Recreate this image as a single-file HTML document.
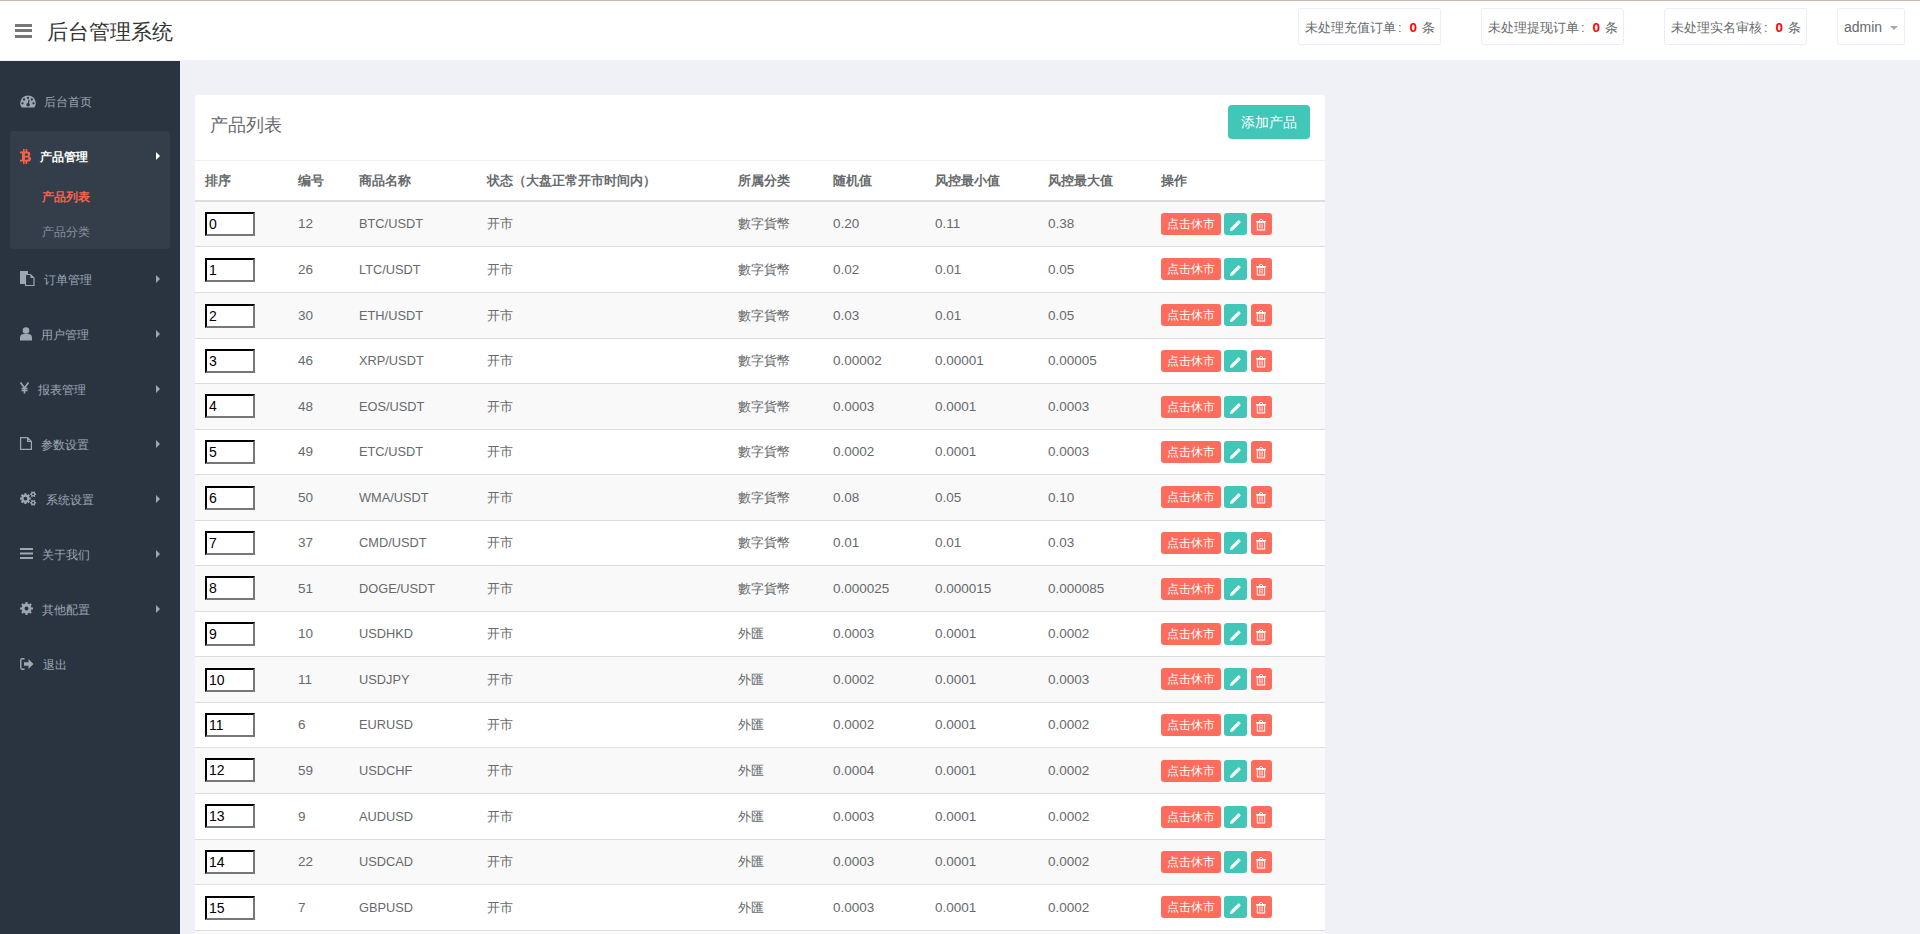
<!DOCTYPE html>
<html><head><meta charset="utf-8"><style>*{margin:0;padding:0;box-sizing:border-box}
html,body{width:1920px;height:934px;overflow:hidden;background:#f0f1f6;font-family:"Liberation Sans",sans-serif;color:#676a6c;font-size:13px}
.topline{position:absolute;left:0;top:0;width:1920px;height:1px;background:#c7b9b6}
.header{position:absolute;left:0;top:1px;width:1920px;height:59px;background:#fff}
.ham{position:absolute;left:15px;top:23px;width:17px;height:14px}
.ham i{position:absolute;left:0;width:17px;height:2.5px;background:#777}
.ham i:nth-child(1){top:0px}.ham i:nth-child(2){top:5.3px}.ham i:nth-child(3){top:11px}
.title{position:absolute;left:47px;top:16px;font-size:21px;line-height:30px;color:#333}
.nb{position:absolute;top:7px;height:37px;border:1px solid #eceef5;border-radius:3px;font-size:13px;line-height:37px;padding-left:6px;color:#676a6c;white-space:nowrap}
.nb b{color:#f00;font-weight:bold;font-size:13.5px;margin-right:1px}
.adm{padding-left:6px;font-size:14px;line-height:37px}
.caret{display:inline-block;width:0;height:0;border-left:4px solid transparent;border-right:4px solid transparent;border-top:4px solid #aaa;vertical-align:middle;margin-left:4px}
.side{position:absolute;left:0;top:61px;width:180px;height:873px;background:#2a3441}
.grp{position:absolute;left:10px;top:70px;width:160px;height:118px;background:#343e4b;border-radius:4px}
.si{position:absolute;left:0;width:180px;height:0;font-size:12px;color:#9ea6b2}
.side .si{margin-top:-61px}
.si span{position:absolute;top:-8.5px;line-height:18px;white-space:nowrap}
.si svg{position:absolute}
.si .arr{position:absolute;left:156px;top:-4px;width:0;height:0;border-top:4px solid transparent;border-bottom:4px solid transparent;border-left:4px solid #9ea6b2}
.act{color:#fff;font-weight:bold}
.act .arr{border-left-color:#fff}
.sub{color:#8a929e}
.sub.red{color:#f9614f;font-weight:bold}
.content{position:absolute;left:180px;top:60px;width:1740px;height:874px;background:#f0f1f6}
.panel{position:absolute;left:195px;top:95px;width:1130px;height:900px;background:#fff;border-radius:4px 4px 0 0}
.ptitle{position:absolute;left:15px;top:15px;font-size:18px;line-height:30px;color:#676a6c}
.addbtn{position:absolute;left:1033px;top:10px;width:82px;height:34px;background:#41c6b8;border-radius:4px;color:#fff;font-size:14px;line-height:34px;text-align:center}
.sep{position:absolute;left:0;top:65px;width:1130px;height:1px;background:#eef0f5}
.thr{position:absolute;left:0;top:66px;width:1130px;height:39px;font-weight:bold}
.thr span{position:absolute;top:0.5px;line-height:38px;white-space:nowrap}
.thb{position:absolute;left:0;top:105px;width:1130px;height:2px;background:#ddd}
.tr{position:absolute;left:0;width:1130px}
.tr .c{position:absolute;top:0;white-space:nowrap}
.tr .n{font-size:13.5px}
.tr .a{font-size:12.8px}
.bd{position:absolute;left:0;width:1130px;height:1px;background:#ddd}
.inp{position:absolute;width:50px;height:24px;border:2px solid;border-color:#000 #777 #777 #000;font-family:"Liberation Sans",sans-serif;font-size:14px;padding:0 2px;color:#000;background:#fff;outline:none}
.ops{position:absolute;height:22px;line-height:0;white-space:nowrap}
.btn{display:inline-block;vertical-align:top;height:22px;border-radius:3px;color:#fff;font-weight:normal;font-size:12px;line-height:22px;text-align:center;position:relative}
.btn.r{background:#fe6c5d}
.btn.t{background:#41c6b8}
.ops .btn:first-child{width:60px}
.btn.ic{width:23px;margin-left:3px}
.btn.ic2{width:21px;margin-left:4px}
.btn svg{position:absolute;left:6px;top:5px}
.nb .co{display:inline-block;width:13.5px;padding-left:2px}
</style></head><body>
<div class="topline"></div>
<div class="header">
  <div class="ham"><i></i><i></i><i></i></div>
  <div class="title">后台管理系统</div>
  <div class="nb" style="left:1298px;width:143px">未处理充值订单<span class="co">:</span><b>0</b> 条</div>
  <div class="nb" style="left:1481px;width:143px">未处理提现订单<span class="co">:</span><b>0</b> 条</div>
  <div class="nb" style="left:1664px;width:143px">未处理实名审核<span class="co">:</span><b>0</b> 条</div>
  <div class="nb adm" style="left:1837px;width:68px">admin <i class="caret"></i></div>
</div>
<div class="side">
  <div class="grp"></div>
  <div class="si" style="top:101px"><svg width="16" height="13" viewBox="0 0 16 13" style="left:19.5px;top:-6.5px"><path d="M1.56 12.6A7.8 7.8 0 1 1 14.44 12.6Z" fill="#9ea6b2"/><path d="M8.1 9.8 L9 4.8" stroke="#2a3441" stroke-width="1.2"/><circle cx="8.1" cy="9.8" r="1.8" fill="#2a3441"/><circle cx="8" cy="2.9" r="1.1" fill="#2a3441"/><circle cx="4" cy="4.5" r="1.15" fill="#2a3441"/><circle cx="11.8" cy="4.5" r="1.15" fill="#2a3441"/><circle cx="2.5" cy="8.3" r="1.15" fill="#2a3441"/><circle cx="13.5" cy="8.3" r="1.15" fill="#2a3441"/></svg><span style="left:44px">后台首页</span></div><div class="si" style="top:279px"><svg width="15" height="15" viewBox="0 0 15 15" style="left:20px;top:-8px"><path d="M0 0h8v3H5v10H0z" fill="#9ea6b2"/><path d="M5.5 3.5h5l3.5 3.5v7.5h-8.5z" fill="none" stroke="#9ea6b2" stroke-width="1.2"/><path d="M10.5 3.5v3.5h3.5" fill="#9ea6b2"/></svg><span style="left:44px">订单管理</span><i class="arr"></i></div><div class="si" style="top:334px"><svg width="12" height="14" viewBox="0 0 12 14" style="left:20px;top:-7px"><circle cx="6" cy="3.5" r="3.3" fill="#9ea6b2"/><path d="M0 13.5v-2.5a4 4 0 0 1 4-4h4a4 4 0 0 1 4 4v2.5z" fill="#9ea6b2"/></svg><span style="left:41px">用户管理</span><i class="arr"></i></div><div class="si" style="top:389px"><svg width="9" height="12" viewBox="0 0 9 12" style="left:20px;top:-7px"><path d="M0.5 0.5 L4.5 6 L8.5 0.5 M4.5 6 V11.5 M1.5 6.5 H7.5 M1.5 8.5 H7.5" fill="none" stroke="#9ea6b2" stroke-width="1.6"/></svg><span style="left:38px">报表管理</span><i class="arr"></i></div><div class="si" style="top:444px"><svg width="12" height="13" viewBox="0 0 12 13" style="left:20px;top:-7px"><path d="M0.6 0.6h7l3.8 3.8v8H0.6z M7.6 0.6v3.8h3.8" fill="none" stroke="#9ea6b2" stroke-width="1.2"/></svg><span style="left:41px">参数设置</span><i class="arr"></i></div><div class="si" style="top:499px"><svg width="18" height="16" viewBox="0 0 18 16" style="left:19px;top:-9px"><path fill-rule="evenodd" d="M10.47 7.58 L11.79 7.53 L11.79 9.67 L10.47 9.62 L10.00 10.76 L10.97 11.66 L9.46 13.17 L8.56 12.20 L7.42 12.67 L7.47 13.99 L5.33 13.99 L5.38 12.67 L4.24 12.20 L3.34 13.17 L1.83 11.66 L2.80 10.76 L2.33 9.62 L1.01 9.67 L1.01 7.53 L2.33 7.58 L2.80 6.44 L1.83 5.54 L3.34 4.03 L4.24 5.00 L5.38 4.53 L5.33 3.21 L7.47 3.21 L7.42 4.53 L8.56 5.00 L9.46 4.03 L10.97 5.54 L10.00 6.44 Z M8.30 8.60 A1.9 1.9 0 1 0 4.50 8.60 A1.9 1.9 0 1 0 8.30 8.60 Z" fill="#9ea6b2"/><path fill-rule="evenodd" d="M16.18 3.49 L17.09 3.40 L17.09 5.00 L16.18 4.91 L15.75 5.65 L16.29 6.39 L14.90 7.19 L14.53 6.36 L13.67 6.36 L13.30 7.19 L11.91 6.39 L12.45 5.65 L12.02 4.91 L11.11 5.00 L11.11 3.40 L12.02 3.49 L12.45 2.75 L11.91 2.01 L13.30 1.21 L13.67 2.04 L14.53 2.04 L14.90 1.21 L16.29 2.01 L15.75 2.75 Z M15.10 4.20 A1.0 1.0 0 1 0 13.10 4.20 A1.0 1.0 0 1 0 15.10 4.20 Z" fill="#9ea6b2"/><path fill-rule="evenodd" d="M16.18 12.09 L17.09 12.00 L17.09 13.60 L16.18 13.51 L15.75 14.25 L16.29 14.99 L14.90 15.79 L14.53 14.96 L13.67 14.96 L13.30 15.79 L11.91 14.99 L12.45 14.25 L12.02 13.51 L11.11 13.60 L11.11 12.00 L12.02 12.09 L12.45 11.35 L11.91 10.61 L13.30 9.81 L13.67 10.64 L14.53 10.64 L14.90 9.81 L16.29 10.61 L15.75 11.35 Z M15.10 12.80 A1.0 1.0 0 1 0 13.10 12.80 A1.0 1.0 0 1 0 15.10 12.80 Z" fill="#9ea6b2"/></svg><span style="left:46px">系统设置</span><i class="arr"></i></div><div class="si" style="top:554px"><svg width="13" height="11" viewBox="0 0 13 11" style="left:20px;top:-6px"><path d="M0 0h13v2H0z M0 4.5h13v2H0z M0 9h13v2H0z" fill="#9ea6b2"/></svg><span style="left:42px">关于我们</span><i class="arr"></i></div><div class="si" style="top:609px"><svg width="16" height="16" viewBox="0 0 16 16" style="left:19px;top:-9px"><path fill-rule="evenodd" d="M12.39 7.48 L14.01 7.42 L14.01 9.58 L12.39 9.52 L11.68 11.24 L12.87 12.34 L11.34 13.87 L10.24 12.68 L8.52 13.39 L8.58 15.01 L6.42 15.01 L6.48 13.39 L4.76 12.68 L3.66 13.87 L2.13 12.34 L3.32 11.24 L2.61 9.52 L0.99 9.58 L0.99 7.42 L2.61 7.48 L3.32 5.76 L2.13 4.66 L3.66 3.13 L4.76 4.32 L6.48 3.61 L6.42 1.99 L8.58 1.99 L8.52 3.61 L10.24 4.32 L11.34 3.13 L12.87 4.66 L11.68 5.76 Z M9.50 8.50 A2.0 2.0 0 1 0 5.50 8.50 A2.0 2.0 0 1 0 9.50 8.50 Z" fill="#9ea6b2"/></svg><span style="left:42px">其他配置</span><i class="arr"></i></div><div class="si" style="top:664px"><svg width="14" height="12" viewBox="0 0 14 12" style="left:20px;top:-6px"><path d="M4.5 0.8H2A1.3 1.3 0 0 0 0.8 2v8A1.3 1.3 0 0 0 2 11.2h2.5" fill="none" stroke="#9ea6b2" stroke-width="1.4"/><path d="M4 4.2h4.5V1L13.5 6 8.5 11V7.8H4z" fill="#9ea6b2"/></svg><span style="left:43px">退出</span></div>
  <div class="si act" style="top:156px"><svg width="12" height="15" viewBox="0 0 12 15" style="left:20px;top:-7px"><path fill-rule="evenodd" fill="#f9614f" d="M0 2.5H7.3C9.4 2.5 10.3 3.6 10.3 4.9C10.3 6 9.7 6.8 9 7.2C10.3 7.6 11 8.6 11 9.9C11 11.6 9.8 12.5 7.7 12.5H0V10.7H2V4.3H0Z M4.9 4.6H6.9C7.6 4.6 8 5.1 8 5.7C8 6.3 7.6 6.8 6.9 6.8H4.9Z M4.9 8.5H7.3C8 8.5 8.5 9 8.5 9.6C8.5 10.2 8 10.7 7.3 10.7H4.9Z M3 0H4.6V2.6H3Z M5.6 0H7.2V2.6H5.6Z M3 12.4H4.6V15H3Z M5.6 12.4H7.2V15H5.6Z"/></svg><span style="left:40px;top:-8px">产品管理</span><i class="arr"></i></div>
  <div class="si sub red" style="top:196px"><span style="left:42px">产品列表</span></div>
  <div class="si sub" style="top:231px"><span style="left:42px">产品分类</span></div>
</div>
<div class="content"></div>
<div class="panel">
  <div class="ptitle">产品列表</div>
  <div class="addbtn">添加产品</div>
  <div class="sep"></div>
  <div class="thr">
    <span style="left:10px">排序</span><span style="left:103px">编号</span><span style="left:164px">商品名称</span><span style="left:292px">状态（大盘正常开市时间内）</span><span style="left:543px">所属分类</span><span style="left:638px">随机值</span><span style="left:740px">风控最小值</span><span style="left:853px">风控最大值</span><span style="left:966px">操作</span>
  </div>
  <div class="thb"></div>
  <div class="tr" style="top:107px;height:44px;line-height:44px;background:#f9f9f9"><input class="inp" style="left:10px;top:10px" value="0"><span class="c n" style="left:103px">12</span><span class="c a" style="left:164px">BTC/USDT</span><span class="c" style="left:292px">开市</span><span class="c" style="left:543px">數字貨幣</span><span class="c n" style="left:638px">0.20</span><span class="c n" style="left:740px">0.11</span><span class="c n" style="left:853px">0.38</span><span class="ops" style="left:966px;top:11px"><b class="btn r">点击休市</b><b class="btn t ic"><svg width="11" height="11" viewBox="0 0 11 11" style="left:6px;top:6.5px"><path d="M0.1 10.9 L0.4 8.3 L8.2 0.5 Q8.7 0.1 9.2 0.6 L10.4 1.8 Q10.9 2.3 10.5 2.8 L2.7 10.6 Z" fill="#fff"/><path d="M6.6 1.7 L9.2 4.3" stroke="#41c6b8" stroke-width="0.5" opacity="0.6"/><path d="M0.9 8.4 L2.5 10" stroke="#41c6b8" stroke-width="0.6" opacity="0.7"/></svg></b><b class="btn r ic2"><svg width="10" height="12" viewBox="0 0 11 12" preserveAspectRatio="none" style="left:5px;top:6px"><path d="M3.6 2 Q3.8 0.5 5.5 0.5 Q7.2 0.5 7.4 2" fill="none" stroke="#fff" stroke-width="1"/><rect x="0" y="2" width="11" height="1.3" fill="#fff"/><rect x="1.45" y="3.2" width="8.1" height="7.8" fill="none" stroke="#fff" stroke-width="1.1"/><path d="M3.9 4.4V9.6 M5.5 4.4V9.6 M7.1 4.4V9.6" stroke="#fff" stroke-width="0.7"/></svg></b></span></div><div class="bd" style="top:151px"></div><div class="tr" style="top:152px;height:45px;line-height:45px;background:#fff"><input class="inp" style="left:10px;top:11px" value="1"><span class="c n" style="left:103px">26</span><span class="c a" style="left:164px">LTC/USDT</span><span class="c" style="left:292px">开市</span><span class="c" style="left:543px">數字貨幣</span><span class="c n" style="left:638px">0.02</span><span class="c n" style="left:740px">0.01</span><span class="c n" style="left:853px">0.05</span><span class="ops" style="left:966px;top:11px"><b class="btn r">点击休市</b><b class="btn t ic"><svg width="11" height="11" viewBox="0 0 11 11" style="left:6px;top:6.5px"><path d="M0.1 10.9 L0.4 8.3 L8.2 0.5 Q8.7 0.1 9.2 0.6 L10.4 1.8 Q10.9 2.3 10.5 2.8 L2.7 10.6 Z" fill="#fff"/><path d="M6.6 1.7 L9.2 4.3" stroke="#41c6b8" stroke-width="0.5" opacity="0.6"/><path d="M0.9 8.4 L2.5 10" stroke="#41c6b8" stroke-width="0.6" opacity="0.7"/></svg></b><b class="btn r ic2"><svg width="10" height="12" viewBox="0 0 11 12" preserveAspectRatio="none" style="left:5px;top:6px"><path d="M3.6 2 Q3.8 0.5 5.5 0.5 Q7.2 0.5 7.4 2" fill="none" stroke="#fff" stroke-width="1"/><rect x="0" y="2" width="11" height="1.3" fill="#fff"/><rect x="1.45" y="3.2" width="8.1" height="7.8" fill="none" stroke="#fff" stroke-width="1.1"/><path d="M3.9 4.4V9.6 M5.5 4.4V9.6 M7.1 4.4V9.6" stroke="#fff" stroke-width="0.7"/></svg></b></span></div><div class="bd" style="top:197px"></div><div class="tr" style="top:198px;height:45px;line-height:45px;background:#f9f9f9"><input class="inp" style="left:10px;top:11px" value="2"><span class="c n" style="left:103px">30</span><span class="c a" style="left:164px">ETH/USDT</span><span class="c" style="left:292px">开市</span><span class="c" style="left:543px">數字貨幣</span><span class="c n" style="left:638px">0.03</span><span class="c n" style="left:740px">0.01</span><span class="c n" style="left:853px">0.05</span><span class="ops" style="left:966px;top:11px"><b class="btn r">点击休市</b><b class="btn t ic"><svg width="11" height="11" viewBox="0 0 11 11" style="left:6px;top:6.5px"><path d="M0.1 10.9 L0.4 8.3 L8.2 0.5 Q8.7 0.1 9.2 0.6 L10.4 1.8 Q10.9 2.3 10.5 2.8 L2.7 10.6 Z" fill="#fff"/><path d="M6.6 1.7 L9.2 4.3" stroke="#41c6b8" stroke-width="0.5" opacity="0.6"/><path d="M0.9 8.4 L2.5 10" stroke="#41c6b8" stroke-width="0.6" opacity="0.7"/></svg></b><b class="btn r ic2"><svg width="10" height="12" viewBox="0 0 11 12" preserveAspectRatio="none" style="left:5px;top:6px"><path d="M3.6 2 Q3.8 0.5 5.5 0.5 Q7.2 0.5 7.4 2" fill="none" stroke="#fff" stroke-width="1"/><rect x="0" y="2" width="11" height="1.3" fill="#fff"/><rect x="1.45" y="3.2" width="8.1" height="7.8" fill="none" stroke="#fff" stroke-width="1.1"/><path d="M3.9 4.4V9.6 M5.5 4.4V9.6 M7.1 4.4V9.6" stroke="#fff" stroke-width="0.7"/></svg></b></span></div><div class="bd" style="top:243px"></div><div class="tr" style="top:244px;height:44px;line-height:44px;background:#fff"><input class="inp" style="left:10px;top:10px" value="3"><span class="c n" style="left:103px">46</span><span class="c a" style="left:164px">XRP/USDT</span><span class="c" style="left:292px">开市</span><span class="c" style="left:543px">數字貨幣</span><span class="c n" style="left:638px">0.00002</span><span class="c n" style="left:740px">0.00001</span><span class="c n" style="left:853px">0.00005</span><span class="ops" style="left:966px;top:11px"><b class="btn r">点击休市</b><b class="btn t ic"><svg width="11" height="11" viewBox="0 0 11 11" style="left:6px;top:6.5px"><path d="M0.1 10.9 L0.4 8.3 L8.2 0.5 Q8.7 0.1 9.2 0.6 L10.4 1.8 Q10.9 2.3 10.5 2.8 L2.7 10.6 Z" fill="#fff"/><path d="M6.6 1.7 L9.2 4.3" stroke="#41c6b8" stroke-width="0.5" opacity="0.6"/><path d="M0.9 8.4 L2.5 10" stroke="#41c6b8" stroke-width="0.6" opacity="0.7"/></svg></b><b class="btn r ic2"><svg width="10" height="12" viewBox="0 0 11 12" preserveAspectRatio="none" style="left:5px;top:6px"><path d="M3.6 2 Q3.8 0.5 5.5 0.5 Q7.2 0.5 7.4 2" fill="none" stroke="#fff" stroke-width="1"/><rect x="0" y="2" width="11" height="1.3" fill="#fff"/><rect x="1.45" y="3.2" width="8.1" height="7.8" fill="none" stroke="#fff" stroke-width="1.1"/><path d="M3.9 4.4V9.6 M5.5 4.4V9.6 M7.1 4.4V9.6" stroke="#fff" stroke-width="0.7"/></svg></b></span></div><div class="bd" style="top:288px"></div><div class="tr" style="top:289px;height:45px;line-height:45px;background:#f9f9f9"><input class="inp" style="left:10px;top:10px" value="4"><span class="c n" style="left:103px">48</span><span class="c a" style="left:164px">EOS/USDT</span><span class="c" style="left:292px">开市</span><span class="c" style="left:543px">數字貨幣</span><span class="c n" style="left:638px">0.0003</span><span class="c n" style="left:740px">0.0001</span><span class="c n" style="left:853px">0.0003</span><span class="ops" style="left:966px;top:12px"><b class="btn r">点击休市</b><b class="btn t ic"><svg width="11" height="11" viewBox="0 0 11 11" style="left:6px;top:6.5px"><path d="M0.1 10.9 L0.4 8.3 L8.2 0.5 Q8.7 0.1 9.2 0.6 L10.4 1.8 Q10.9 2.3 10.5 2.8 L2.7 10.6 Z" fill="#fff"/><path d="M6.6 1.7 L9.2 4.3" stroke="#41c6b8" stroke-width="0.5" opacity="0.6"/><path d="M0.9 8.4 L2.5 10" stroke="#41c6b8" stroke-width="0.6" opacity="0.7"/></svg></b><b class="btn r ic2"><svg width="10" height="12" viewBox="0 0 11 12" preserveAspectRatio="none" style="left:5px;top:6px"><path d="M3.6 2 Q3.8 0.5 5.5 0.5 Q7.2 0.5 7.4 2" fill="none" stroke="#fff" stroke-width="1"/><rect x="0" y="2" width="11" height="1.3" fill="#fff"/><rect x="1.45" y="3.2" width="8.1" height="7.8" fill="none" stroke="#fff" stroke-width="1.1"/><path d="M3.9 4.4V9.6 M5.5 4.4V9.6 M7.1 4.4V9.6" stroke="#fff" stroke-width="0.7"/></svg></b></span></div><div class="bd" style="top:334px"></div><div class="tr" style="top:335px;height:44px;line-height:44px;background:#fff"><input class="inp" style="left:10px;top:10px" value="5"><span class="c n" style="left:103px">49</span><span class="c a" style="left:164px">ETC/USDT</span><span class="c" style="left:292px">开市</span><span class="c" style="left:543px">數字貨幣</span><span class="c n" style="left:638px">0.0002</span><span class="c n" style="left:740px">0.0001</span><span class="c n" style="left:853px">0.0003</span><span class="ops" style="left:966px;top:11px"><b class="btn r">点击休市</b><b class="btn t ic"><svg width="11" height="11" viewBox="0 0 11 11" style="left:6px;top:6.5px"><path d="M0.1 10.9 L0.4 8.3 L8.2 0.5 Q8.7 0.1 9.2 0.6 L10.4 1.8 Q10.9 2.3 10.5 2.8 L2.7 10.6 Z" fill="#fff"/><path d="M6.6 1.7 L9.2 4.3" stroke="#41c6b8" stroke-width="0.5" opacity="0.6"/><path d="M0.9 8.4 L2.5 10" stroke="#41c6b8" stroke-width="0.6" opacity="0.7"/></svg></b><b class="btn r ic2"><svg width="10" height="12" viewBox="0 0 11 12" preserveAspectRatio="none" style="left:5px;top:6px"><path d="M3.6 2 Q3.8 0.5 5.5 0.5 Q7.2 0.5 7.4 2" fill="none" stroke="#fff" stroke-width="1"/><rect x="0" y="2" width="11" height="1.3" fill="#fff"/><rect x="1.45" y="3.2" width="8.1" height="7.8" fill="none" stroke="#fff" stroke-width="1.1"/><path d="M3.9 4.4V9.6 M5.5 4.4V9.6 M7.1 4.4V9.6" stroke="#fff" stroke-width="0.7"/></svg></b></span></div><div class="bd" style="top:379px"></div><div class="tr" style="top:380px;height:45px;line-height:45px;background:#f9f9f9"><input class="inp" style="left:10px;top:11px" value="6"><span class="c n" style="left:103px">50</span><span class="c a" style="left:164px">WMA/USDT</span><span class="c" style="left:292px">开市</span><span class="c" style="left:543px">數字貨幣</span><span class="c n" style="left:638px">0.08</span><span class="c n" style="left:740px">0.05</span><span class="c n" style="left:853px">0.10</span><span class="ops" style="left:966px;top:11px"><b class="btn r">点击休市</b><b class="btn t ic"><svg width="11" height="11" viewBox="0 0 11 11" style="left:6px;top:6.5px"><path d="M0.1 10.9 L0.4 8.3 L8.2 0.5 Q8.7 0.1 9.2 0.6 L10.4 1.8 Q10.9 2.3 10.5 2.8 L2.7 10.6 Z" fill="#fff"/><path d="M6.6 1.7 L9.2 4.3" stroke="#41c6b8" stroke-width="0.5" opacity="0.6"/><path d="M0.9 8.4 L2.5 10" stroke="#41c6b8" stroke-width="0.6" opacity="0.7"/></svg></b><b class="btn r ic2"><svg width="10" height="12" viewBox="0 0 11 12" preserveAspectRatio="none" style="left:5px;top:6px"><path d="M3.6 2 Q3.8 0.5 5.5 0.5 Q7.2 0.5 7.4 2" fill="none" stroke="#fff" stroke-width="1"/><rect x="0" y="2" width="11" height="1.3" fill="#fff"/><rect x="1.45" y="3.2" width="8.1" height="7.8" fill="none" stroke="#fff" stroke-width="1.1"/><path d="M3.9 4.4V9.6 M5.5 4.4V9.6 M7.1 4.4V9.6" stroke="#fff" stroke-width="0.7"/></svg></b></span></div><div class="bd" style="top:425px"></div><div class="tr" style="top:426px;height:44px;line-height:44px;background:#fff"><input class="inp" style="left:10px;top:10px" value="7"><span class="c n" style="left:103px">37</span><span class="c a" style="left:164px">CMD/USDT</span><span class="c" style="left:292px">开市</span><span class="c" style="left:543px">數字貨幣</span><span class="c n" style="left:638px">0.01</span><span class="c n" style="left:740px">0.01</span><span class="c n" style="left:853px">0.03</span><span class="ops" style="left:966px;top:11px"><b class="btn r">点击休市</b><b class="btn t ic"><svg width="11" height="11" viewBox="0 0 11 11" style="left:6px;top:6.5px"><path d="M0.1 10.9 L0.4 8.3 L8.2 0.5 Q8.7 0.1 9.2 0.6 L10.4 1.8 Q10.9 2.3 10.5 2.8 L2.7 10.6 Z" fill="#fff"/><path d="M6.6 1.7 L9.2 4.3" stroke="#41c6b8" stroke-width="0.5" opacity="0.6"/><path d="M0.9 8.4 L2.5 10" stroke="#41c6b8" stroke-width="0.6" opacity="0.7"/></svg></b><b class="btn r ic2"><svg width="10" height="12" viewBox="0 0 11 12" preserveAspectRatio="none" style="left:5px;top:6px"><path d="M3.6 2 Q3.8 0.5 5.5 0.5 Q7.2 0.5 7.4 2" fill="none" stroke="#fff" stroke-width="1"/><rect x="0" y="2" width="11" height="1.3" fill="#fff"/><rect x="1.45" y="3.2" width="8.1" height="7.8" fill="none" stroke="#fff" stroke-width="1.1"/><path d="M3.9 4.4V9.6 M5.5 4.4V9.6 M7.1 4.4V9.6" stroke="#fff" stroke-width="0.7"/></svg></b></span></div><div class="bd" style="top:470px"></div><div class="tr" style="top:471px;height:45px;line-height:45px;background:#f9f9f9"><input class="inp" style="left:10px;top:10px" value="8"><span class="c n" style="left:103px">51</span><span class="c a" style="left:164px">DOGE/USDT</span><span class="c" style="left:292px">开市</span><span class="c" style="left:543px">數字貨幣</span><span class="c n" style="left:638px">0.000025</span><span class="c n" style="left:740px">0.000015</span><span class="c n" style="left:853px">0.000085</span><span class="ops" style="left:966px;top:12px"><b class="btn r">点击休市</b><b class="btn t ic"><svg width="11" height="11" viewBox="0 0 11 11" style="left:6px;top:6.5px"><path d="M0.1 10.9 L0.4 8.3 L8.2 0.5 Q8.7 0.1 9.2 0.6 L10.4 1.8 Q10.9 2.3 10.5 2.8 L2.7 10.6 Z" fill="#fff"/><path d="M6.6 1.7 L9.2 4.3" stroke="#41c6b8" stroke-width="0.5" opacity="0.6"/><path d="M0.9 8.4 L2.5 10" stroke="#41c6b8" stroke-width="0.6" opacity="0.7"/></svg></b><b class="btn r ic2"><svg width="10" height="12" viewBox="0 0 11 12" preserveAspectRatio="none" style="left:5px;top:6px"><path d="M3.6 2 Q3.8 0.5 5.5 0.5 Q7.2 0.5 7.4 2" fill="none" stroke="#fff" stroke-width="1"/><rect x="0" y="2" width="11" height="1.3" fill="#fff"/><rect x="1.45" y="3.2" width="8.1" height="7.8" fill="none" stroke="#fff" stroke-width="1.1"/><path d="M3.9 4.4V9.6 M5.5 4.4V9.6 M7.1 4.4V9.6" stroke="#fff" stroke-width="0.7"/></svg></b></span></div><div class="bd" style="top:516px"></div><div class="tr" style="top:517px;height:44px;line-height:44px;background:#fff"><input class="inp" style="left:10px;top:10px" value="9"><span class="c n" style="left:103px">10</span><span class="c a" style="left:164px">USDHKD</span><span class="c" style="left:292px">开市</span><span class="c" style="left:543px">外匯</span><span class="c n" style="left:638px">0.0003</span><span class="c n" style="left:740px">0.0001</span><span class="c n" style="left:853px">0.0002</span><span class="ops" style="left:966px;top:11px"><b class="btn r">点击休市</b><b class="btn t ic"><svg width="11" height="11" viewBox="0 0 11 11" style="left:6px;top:6.5px"><path d="M0.1 10.9 L0.4 8.3 L8.2 0.5 Q8.7 0.1 9.2 0.6 L10.4 1.8 Q10.9 2.3 10.5 2.8 L2.7 10.6 Z" fill="#fff"/><path d="M6.6 1.7 L9.2 4.3" stroke="#41c6b8" stroke-width="0.5" opacity="0.6"/><path d="M0.9 8.4 L2.5 10" stroke="#41c6b8" stroke-width="0.6" opacity="0.7"/></svg></b><b class="btn r ic2"><svg width="10" height="12" viewBox="0 0 11 12" preserveAspectRatio="none" style="left:5px;top:6px"><path d="M3.6 2 Q3.8 0.5 5.5 0.5 Q7.2 0.5 7.4 2" fill="none" stroke="#fff" stroke-width="1"/><rect x="0" y="2" width="11" height="1.3" fill="#fff"/><rect x="1.45" y="3.2" width="8.1" height="7.8" fill="none" stroke="#fff" stroke-width="1.1"/><path d="M3.9 4.4V9.6 M5.5 4.4V9.6 M7.1 4.4V9.6" stroke="#fff" stroke-width="0.7"/></svg></b></span></div><div class="bd" style="top:561px"></div><div class="tr" style="top:562px;height:45px;line-height:45px;background:#f9f9f9"><input class="inp" style="left:10px;top:11px" value="10"><span class="c n" style="left:103px">11</span><span class="c a" style="left:164px">USDJPY</span><span class="c" style="left:292px">开市</span><span class="c" style="left:543px">外匯</span><span class="c n" style="left:638px">0.0002</span><span class="c n" style="left:740px">0.0001</span><span class="c n" style="left:853px">0.0003</span><span class="ops" style="left:966px;top:11px"><b class="btn r">点击休市</b><b class="btn t ic"><svg width="11" height="11" viewBox="0 0 11 11" style="left:6px;top:6.5px"><path d="M0.1 10.9 L0.4 8.3 L8.2 0.5 Q8.7 0.1 9.2 0.6 L10.4 1.8 Q10.9 2.3 10.5 2.8 L2.7 10.6 Z" fill="#fff"/><path d="M6.6 1.7 L9.2 4.3" stroke="#41c6b8" stroke-width="0.5" opacity="0.6"/><path d="M0.9 8.4 L2.5 10" stroke="#41c6b8" stroke-width="0.6" opacity="0.7"/></svg></b><b class="btn r ic2"><svg width="10" height="12" viewBox="0 0 11 12" preserveAspectRatio="none" style="left:5px;top:6px"><path d="M3.6 2 Q3.8 0.5 5.5 0.5 Q7.2 0.5 7.4 2" fill="none" stroke="#fff" stroke-width="1"/><rect x="0" y="2" width="11" height="1.3" fill="#fff"/><rect x="1.45" y="3.2" width="8.1" height="7.8" fill="none" stroke="#fff" stroke-width="1.1"/><path d="M3.9 4.4V9.6 M5.5 4.4V9.6 M7.1 4.4V9.6" stroke="#fff" stroke-width="0.7"/></svg></b></span></div><div class="bd" style="top:607px"></div><div class="tr" style="top:608px;height:44px;line-height:44px;background:#fff"><input class="inp" style="left:10px;top:10px" value="11"><span class="c n" style="left:103px">6</span><span class="c a" style="left:164px">EURUSD</span><span class="c" style="left:292px">开市</span><span class="c" style="left:543px">外匯</span><span class="c n" style="left:638px">0.0002</span><span class="c n" style="left:740px">0.0001</span><span class="c n" style="left:853px">0.0002</span><span class="ops" style="left:966px;top:11px"><b class="btn r">点击休市</b><b class="btn t ic"><svg width="11" height="11" viewBox="0 0 11 11" style="left:6px;top:6.5px"><path d="M0.1 10.9 L0.4 8.3 L8.2 0.5 Q8.7 0.1 9.2 0.6 L10.4 1.8 Q10.9 2.3 10.5 2.8 L2.7 10.6 Z" fill="#fff"/><path d="M6.6 1.7 L9.2 4.3" stroke="#41c6b8" stroke-width="0.5" opacity="0.6"/><path d="M0.9 8.4 L2.5 10" stroke="#41c6b8" stroke-width="0.6" opacity="0.7"/></svg></b><b class="btn r ic2"><svg width="10" height="12" viewBox="0 0 11 12" preserveAspectRatio="none" style="left:5px;top:6px"><path d="M3.6 2 Q3.8 0.5 5.5 0.5 Q7.2 0.5 7.4 2" fill="none" stroke="#fff" stroke-width="1"/><rect x="0" y="2" width="11" height="1.3" fill="#fff"/><rect x="1.45" y="3.2" width="8.1" height="7.8" fill="none" stroke="#fff" stroke-width="1.1"/><path d="M3.9 4.4V9.6 M5.5 4.4V9.6 M7.1 4.4V9.6" stroke="#fff" stroke-width="0.7"/></svg></b></span></div><div class="bd" style="top:652px"></div><div class="tr" style="top:653px;height:45px;line-height:45px;background:#f9f9f9"><input class="inp" style="left:10px;top:10px" value="12"><span class="c n" style="left:103px">59</span><span class="c a" style="left:164px">USDCHF</span><span class="c" style="left:292px">开市</span><span class="c" style="left:543px">外匯</span><span class="c n" style="left:638px">0.0004</span><span class="c n" style="left:740px">0.0001</span><span class="c n" style="left:853px">0.0002</span><span class="ops" style="left:966px;top:12px"><b class="btn r">点击休市</b><b class="btn t ic"><svg width="11" height="11" viewBox="0 0 11 11" style="left:6px;top:6.5px"><path d="M0.1 10.9 L0.4 8.3 L8.2 0.5 Q8.7 0.1 9.2 0.6 L10.4 1.8 Q10.9 2.3 10.5 2.8 L2.7 10.6 Z" fill="#fff"/><path d="M6.6 1.7 L9.2 4.3" stroke="#41c6b8" stroke-width="0.5" opacity="0.6"/><path d="M0.9 8.4 L2.5 10" stroke="#41c6b8" stroke-width="0.6" opacity="0.7"/></svg></b><b class="btn r ic2"><svg width="10" height="12" viewBox="0 0 11 12" preserveAspectRatio="none" style="left:5px;top:6px"><path d="M3.6 2 Q3.8 0.5 5.5 0.5 Q7.2 0.5 7.4 2" fill="none" stroke="#fff" stroke-width="1"/><rect x="0" y="2" width="11" height="1.3" fill="#fff"/><rect x="1.45" y="3.2" width="8.1" height="7.8" fill="none" stroke="#fff" stroke-width="1.1"/><path d="M3.9 4.4V9.6 M5.5 4.4V9.6 M7.1 4.4V9.6" stroke="#fff" stroke-width="0.7"/></svg></b></span></div><div class="bd" style="top:698px"></div><div class="tr" style="top:699px;height:45px;line-height:45px;background:#fff"><input class="inp" style="left:10px;top:10px" value="13"><span class="c n" style="left:103px">9</span><span class="c a" style="left:164px">AUDUSD</span><span class="c" style="left:292px">开市</span><span class="c" style="left:543px">外匯</span><span class="c n" style="left:638px">0.0003</span><span class="c n" style="left:740px">0.0001</span><span class="c n" style="left:853px">0.0002</span><span class="ops" style="left:966px;top:12px"><b class="btn r">点击休市</b><b class="btn t ic"><svg width="11" height="11" viewBox="0 0 11 11" style="left:6px;top:6.5px"><path d="M0.1 10.9 L0.4 8.3 L8.2 0.5 Q8.7 0.1 9.2 0.6 L10.4 1.8 Q10.9 2.3 10.5 2.8 L2.7 10.6 Z" fill="#fff"/><path d="M6.6 1.7 L9.2 4.3" stroke="#41c6b8" stroke-width="0.5" opacity="0.6"/><path d="M0.9 8.4 L2.5 10" stroke="#41c6b8" stroke-width="0.6" opacity="0.7"/></svg></b><b class="btn r ic2"><svg width="10" height="12" viewBox="0 0 11 12" preserveAspectRatio="none" style="left:5px;top:6px"><path d="M3.6 2 Q3.8 0.5 5.5 0.5 Q7.2 0.5 7.4 2" fill="none" stroke="#fff" stroke-width="1"/><rect x="0" y="2" width="11" height="1.3" fill="#fff"/><rect x="1.45" y="3.2" width="8.1" height="7.8" fill="none" stroke="#fff" stroke-width="1.1"/><path d="M3.9 4.4V9.6 M5.5 4.4V9.6 M7.1 4.4V9.6" stroke="#fff" stroke-width="0.7"/></svg></b></span></div><div class="bd" style="top:744px"></div><div class="tr" style="top:745px;height:44px;line-height:44px;background:#f9f9f9"><input class="inp" style="left:10px;top:10px" value="14"><span class="c n" style="left:103px">22</span><span class="c a" style="left:164px">USDCAD</span><span class="c" style="left:292px">开市</span><span class="c" style="left:543px">外匯</span><span class="c n" style="left:638px">0.0003</span><span class="c n" style="left:740px">0.0001</span><span class="c n" style="left:853px">0.0002</span><span class="ops" style="left:966px;top:11px"><b class="btn r">点击休市</b><b class="btn t ic"><svg width="11" height="11" viewBox="0 0 11 11" style="left:6px;top:6.5px"><path d="M0.1 10.9 L0.4 8.3 L8.2 0.5 Q8.7 0.1 9.2 0.6 L10.4 1.8 Q10.9 2.3 10.5 2.8 L2.7 10.6 Z" fill="#fff"/><path d="M6.6 1.7 L9.2 4.3" stroke="#41c6b8" stroke-width="0.5" opacity="0.6"/><path d="M0.9 8.4 L2.5 10" stroke="#41c6b8" stroke-width="0.6" opacity="0.7"/></svg></b><b class="btn r ic2"><svg width="10" height="12" viewBox="0 0 11 12" preserveAspectRatio="none" style="left:5px;top:6px"><path d="M3.6 2 Q3.8 0.5 5.5 0.5 Q7.2 0.5 7.4 2" fill="none" stroke="#fff" stroke-width="1"/><rect x="0" y="2" width="11" height="1.3" fill="#fff"/><rect x="1.45" y="3.2" width="8.1" height="7.8" fill="none" stroke="#fff" stroke-width="1.1"/><path d="M3.9 4.4V9.6 M5.5 4.4V9.6 M7.1 4.4V9.6" stroke="#fff" stroke-width="0.7"/></svg></b></span></div><div class="bd" style="top:789px"></div><div class="tr" style="top:790px;height:45px;line-height:45px;background:#fff"><input class="inp" style="left:10px;top:11px" value="15"><span class="c n" style="left:103px">7</span><span class="c a" style="left:164px">GBPUSD</span><span class="c" style="left:292px">开市</span><span class="c" style="left:543px">外匯</span><span class="c n" style="left:638px">0.0003</span><span class="c n" style="left:740px">0.0001</span><span class="c n" style="left:853px">0.0002</span><span class="ops" style="left:966px;top:11px"><b class="btn r">点击休市</b><b class="btn t ic"><svg width="11" height="11" viewBox="0 0 11 11" style="left:6px;top:6.5px"><path d="M0.1 10.9 L0.4 8.3 L8.2 0.5 Q8.7 0.1 9.2 0.6 L10.4 1.8 Q10.9 2.3 10.5 2.8 L2.7 10.6 Z" fill="#fff"/><path d="M6.6 1.7 L9.2 4.3" stroke="#41c6b8" stroke-width="0.5" opacity="0.6"/><path d="M0.9 8.4 L2.5 10" stroke="#41c6b8" stroke-width="0.6" opacity="0.7"/></svg></b><b class="btn r ic2"><svg width="10" height="12" viewBox="0 0 11 12" preserveAspectRatio="none" style="left:5px;top:6px"><path d="M3.6 2 Q3.8 0.5 5.5 0.5 Q7.2 0.5 7.4 2" fill="none" stroke="#fff" stroke-width="1"/><rect x="0" y="2" width="11" height="1.3" fill="#fff"/><rect x="1.45" y="3.2" width="8.1" height="7.8" fill="none" stroke="#fff" stroke-width="1.1"/><path d="M3.9 4.4V9.6 M5.5 4.4V9.6 M7.1 4.4V9.6" stroke="#fff" stroke-width="0.7"/></svg></b></span></div><div class="bd" style="top:835px"></div>
  <div class="tr" style="top:836px;height:10px;background:#f9f9f9"></div>
</div>
</body></html>
